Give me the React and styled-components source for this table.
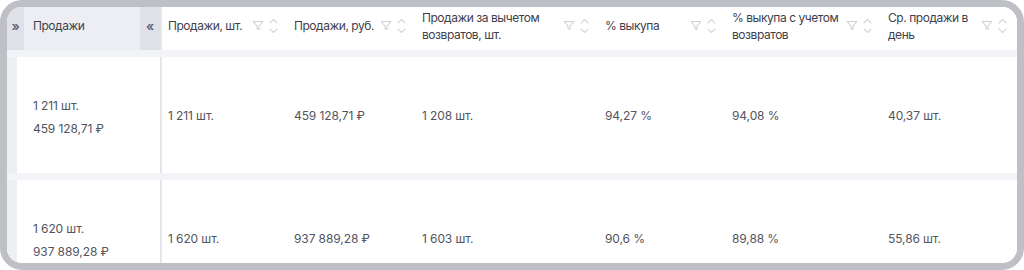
import React from "react";
import styled, { createGlobalStyle } from "styled-components";

const GlobalStyle = createGlobalStyle`
  html, body { margin: 0; padding: 0; background: #ffffff; }
  body { font-family: Inter, "Noto Sans", "DejaVu Sans", sans-serif; }
`;

const Frame = styled.div`
  width: 1024px;
  height: 270px;
  box-sizing: border-box;
  border: 7px solid #bfc0c5;
  border-radius: 22px;
  overflow: hidden;
  background: #ffffff;
`;

const Grid = styled.div`
  display: grid;
  grid-template-columns: 155px 126px 128px 183px 127px 156px 1fr;
  row-gap: 7px;
  background: #f3f4f8;
`;

const HeadCell = styled.div`
  height: 43px;
  box-sizing: border-box;
  display: flex;
  align-items: center;
  padding: 0 10px 6px 6px;
  background: #ffffff;
  gap: 6px;
`;

const HeadLabel = styled.span`
  flex: 1;
  font-size: 12px;
  letter-spacing: -0.45px;
  line-height: 17px;
  color: #3f414c;
  white-space: pre;
`;

const StickyHead = styled.div`
  height: 43px;
  display: flex;
  align-items: stretch;
  background: #eceef3;
  border-right: 2px solid #e4e5ea;
`;

const CollapseBtn = styled.div`
  width: ${(p) => p.$w}px;
  background: #dfe1e7;
  color: #5f6275;
  font-size: 13px;
  font-weight: 600;
  display: flex;
  align-items: center;
  justify-content: center;
  padding-bottom: 6px;
  box-sizing: border-box;
`;

const StickyLabel = styled.span`
  flex: 1;
  display: flex;
  align-items: center;
  padding: 0 0 6px 9px;
  font-size: 12px;
  letter-spacing: -0.45px;
  color: #3f414c;
`;

const Icons = styled.div`
  display: flex;
  align-items: center;
  gap: 5px;
  flex-shrink: 0;
`;

const BodyCell = styled.div`
  height: 116px;
  display: flex;
  align-items: center;
  padding-left: 6px;
  background: #ffffff;
  font-size: 12px;
  letter-spacing: -0.1px;
  color: #52545e;
`;

const StickyCell = styled.div`
  height: 116px;
  display: flex;
  flex-direction: column;
  justify-content: center;
  box-sizing: border-box;
  padding-left: 16px;
  padding-top: 4px;
  border-left: 10px solid #eeeff2;
  border-right: 2px solid #e4e5ea;
  background: #ffffff;
  font-size: 12px;
  letter-spacing: -0.1px;
  line-height: 23px;
  color: #52545e;
`;

const FilterIcon = () => (
  <svg width="12" height="11" viewBox="0 0 12 11" fill="none">
    <path
      d="M1.2 1.5h9.6L7 6v3.4L5 8.4V6Z"
      stroke="#cfd1d8"
      strokeWidth="1.1"
      strokeLinejoin="round"
    />
  </svg>
);

const SortIcon = () => (
  <svg width="9" height="18" viewBox="0 0 9 18" fill="none">
    <path d="M1 6l3.5-3.5L8 6" stroke="#d5d6dc" strokeWidth="1.1" strokeLinecap="round" strokeLinejoin="round" />
    <path d="M1 12l3.5 3.5L8 12" stroke="#d5d6dc" strokeWidth="1.1" strokeLinecap="round" strokeLinejoin="round" />
  </svg>
);

const headers = [
  "Продажи, шт.",
  "Продажи, руб.",
  "Продажи за вычетом\nвозвратов, шт.",
  "% выкупа",
  "% выкупа с учетом\nвозвратов",
  "Ср. продажи в\nдень",
];

const rows = [
  {
    summary: ["1 211 шт.", "459 128,71 ₽"],
    values: ["1 211 шт.", "459 128,71 ₽", "1 208 шт.", "94,27 %", "94,08 %", "40,37 шт."],
  },
  {
    summary: ["1 620 шт.", "937 889,28 ₽"],
    values: ["1 620 шт.", "937 889,28 ₽", "1 603 шт.", "90,6 %", "89,88 %", "55,86 шт."],
  },
];

export default function App() {
  return (
    <>
      <GlobalStyle />
      <Frame>
        <Grid>
          <StickyHead>
            <CollapseBtn $w={17}>»</CollapseBtn>
            <StickyLabel>Продажи</StickyLabel>
            <CollapseBtn $w={20}>«</CollapseBtn>
          </StickyHead>
          {headers.map((h) => (
            <HeadCell key={h}>
              <HeadLabel>{h}</HeadLabel>
              <Icons>
                <FilterIcon />
                <SortIcon />
              </Icons>
            </HeadCell>
          ))}
          {rows.map((r, i) => (
            <React.Fragment key={i}>
              <StickyCell>
                <span>{r.summary[0]}</span>
                <span>{r.summary[1]}</span>
              </StickyCell>
              {r.values.map((v, j) => (
                <BodyCell key={j}>{v}</BodyCell>
              ))}
            </React.Fragment>
          ))}
        </Grid>
      </Frame>
    </>
  );
}
